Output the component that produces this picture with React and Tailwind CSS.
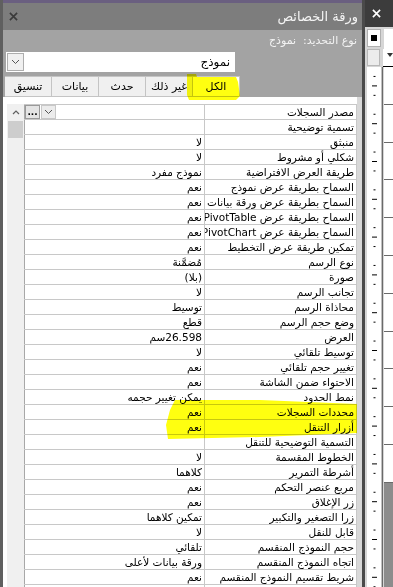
import { useState } from "react";

const rows = [
  ["مصدر السجلات", ""],
  ["تسمية توضيحية", ""],
  ["منبثق", "لا"],
  ["شكلي أو مشروط", "لا"],
  ["طريقة العرض الافتراضية", "نموذج مفرد"],
  ["السماح بطريقة عرض نموذج", "نعم"],
  ["السماح بطريقة عرض ورقة بيانات", "نعم"],
  ["السماح بطريقة عرض PivotTable", "نعم"],
  ["السماح بطريقة عرض PivotChart", "نعم"],
  ["تمكين طريقة عرض التخطيط", "نعم"],
  ["نوع الرسم", "مُضمَّنة"],
  ["صورة", "(بلا)"],
  ["تجانب الرسم", "لا"],
  ["محاذاة الرسم", "توسيط"],
  ["وضع حجم الرسم", "قطع"],
  ["العرض", "26.598سم"],
  ["توسيط تلقائي", "لا"],
  ["تغيير حجم تلقائي", "نعم"],
  ["الاحتواء ضمن الشاشة", "نعم"],
  ["نمط الحدود", "يمكن تغيير حجمه"],
  ["محددات السجلات", "نعم"],
  ["أزرار التنقل", "نعم"],
  ["التسمية التوضيحية للتنقل", ""],
  ["الخطوط المقسمة", "لا"],
  ["أشرطة التمرير", "كلاهما"],
  ["مربع عنصر التحكم", "نعم"],
  ["زر الإغلاق", "نعم"],
  ["زرا التصغير والتكبير", "تمكين كلاهما"],
  ["قابل للنقل", "لا"],
  ["حجم النموذج المنقسم", "تلقائي"],
  ["اتجاه النموذج المنقسم", "ورقة بيانات لأعلى"],
  ["شريط تقسيم النموذج المنقسم", "نعم"],
  ["", ""],
]

const tabs = ["الكل", "غير ذلك", "حدث", "بيانات", "تنسيق"]

function Cross({ color, size = 9 }) {
  return (
    <svg width={size} height={size} viewBox="0 0 10 10">
      <path d="M1 1 L9 9 M9 1 L1 9" stroke={color} strokeWidth="1.8" />
    </svg>
  )
}

function Chevron() {
  return (
    <svg width="9" height="6" viewBox="0 0 9 6">
      <path d="M1 1 L4.5 4.5 L8 1" stroke="#555" strokeWidth="1" fill="none" />
    </svg>
  )
}

function PropertySheet() {
  const [tab, setTab] = useState("الكل")

  return (
    <div dir="rtl" className="flex flex-col w-[362px] shrink-0 h-full bg-[#a3a3a3] border-l-[3px] border-[#5f5f5f]">
      <div className="h-[3px] bg-[#6a5f80]" />
      {/* title */}
      <div className="flex items-center justify-between h-[27px] bg-[#7d7d7d] pr-[4px] pl-[6px]">
        <span className="text-[13px] text-[#f4f4f4]">ورقة الخصائص</span>
        <Cross color="#3a3a3a" size={9} />
      </div>

      <div className="h-[22px] flex items-center pr-[5px] text-[11px] text-[#f2f2f2]">
        نوع التحديد:&nbsp;&nbsp;نموذج
      </div>

      {/* selection dropdown */}
      <div className="flex items-center justify-between h-[20px] mr-[127px] ml-[3px] bg-white">
        <span className="pr-[5px] text-[12px] text-black">نموذج</span>
        <div className="flex items-center justify-center w-[17px] h-[18px] ml-[1px] border border-[#adadad] bg-[#f0f0f0]">
          <Chevron />
        </div>
      </div>

      {/* tabs */}
      <div className="flex h-[21px] mt-[4px] mr-[122px] ml-[2px]">
        {tabs.map((t) => (
          <button
            key={t}
            onClick={() => setTab(t)}
            className={
              "w-[47px] h-full border border-l-0 border-[#c4c4c4] text-[11px] text-black leading-none whitespace-nowrap " +
              (tab === t ? "bg-white" : "bg-[#f0f0f0]")
            }
          >
            {t}
          </button>
        ))}
      </div>

      {/* grid */}
      <div className="flex flex-1 min-h-0">
        <div className="w-[5px] bg-[#d8d8d8]" />
        <div className="flex flex-1 bg-white pt-[7px] pl-[4px]">
          <div className="flex-1 border-t border-r border-[#c8c8c8]">
            {rows.map(([name, value], i) => (
              <div key={i} className="flex h-[15px] border-b border-[#c8c8c8] leading-[14px] text-[10.5px] text-black">
                <div className="w-[152px] shrink-0 pr-[2px] border-l border-[#c8c8c8] overflow-hidden whitespace-nowrap">
                  {name}
                </div>
                <div className="flex flex-1 pr-[2px] border-l border-[#a8a8a8] overflow-hidden whitespace-nowrap">
                  {i === 0 ? (
                    <div className="flex flex-1 justify-end gap-[1px]">
                      <div className="flex items-center justify-center w-[15px] h-[14px] border border-[#c8c8c8] bg-[#ececec]">
                        <Chevron />
                      </div>
                      <div className="flex items-center justify-center w-[15px] h-[14px] border border-[#9a9a9a] bg-[#e4e4e4] text-[9px] font-bold leading-none">
                        ...
                      </div>
                    </div>
                  ) : (
                    value
                  )}
                </div>
              </div>
            ))}
          </div>
          {/* scrollbar */}
          <div className="flex flex-col w-[17px] bg-[#f0f0f0]">
            <div className="flex items-center justify-center h-[17px]">
              <svg width="8" height="5" viewBox="0 0 8 5">
                <path d="M1 4 L4 1 L7 4" stroke="#606060" strokeWidth="1.2" fill="none" />
              </svg>
            </div>
            <div className="h-[17px] mx-[1px] bg-[#cdcdcd]" />
          </div>
        </div>
      </div>
    </div>
  )
}

function Ruler() {
  const ticks = []
  for (let j = 1; j < 56; j++) {
    if (j % 4 === 0) continue
    const y = j * 9.45
    const long = j % 4 === 2
    ticks.push(
      <line key={j} x1={long ? 5 : 6.5} x2={long ? 10 : 8.5} y1={y} y2={y} stroke="#000" strokeWidth="1" />
    )
  }
  return (
    <svg width="14" height="520" viewBox="0 0 14 520" className="block">
      {ticks}
    </svg>
  )
}

function DesignPane() {
  return (
    <div className="flex flex-col w-[28px] shrink-0 h-full bg-[#3c3c3c]">
      <div className="flex items-center h-[30px] pl-[7px]">
        <Cross color="#ffffff" size={9} />
      </div>
      <div className="flex flex-col flex-1 bg-[#d6d6d6] pt-[2px]">
        <div className="flex h-[20px]">
          <div className="flex items-center justify-center w-[14px] ml-[2px] h-[18px] bg-white border border-[#b0b0b0]">
            <div className="w-[6px] h-[6px] bg-black" />
          </div>
          <div className="w-[2px]" />
          <div className="flex-1 ml-[1px] bg-white" />
        </div>
        <div className="flex h-[18px]">
          <div className="w-[14px] ml-[2px] h-[17px] bg-[#ececec] border border-[#b8b8b8]" />
          <div className="w-[3px]" />
          <div className="flex-1 bg-white border-b border-black pl-[4px] pt-[4px]">
            <svg width="6" height="4" viewBox="0 0 6 4">
              <path d="M0 0 L6 0 L3 4 Z" fill="#333" />
            </svg>
          </div>
        </div>
        <div className="flex flex-1 min-h-0 overflow-hidden">
          <div className="w-[14px] ml-[2px] bg-white">
            <Ruler />
          </div>
          <div className="w-[1px] bg-[#c0c0c0]" />
          <div className="w-[1px] bg-[#6a6a6a]" />
          <div className="flex flex-col flex-1 ml-[1px] bg-[#8c8c8c]">
            <div className="flex flex-col bg-white">
              {Array.from({ length: 11 }).map((_, i) => (
                <div key={i} className="h-[37.8px] border-b border-[#6a6a6a]" />
              ))}
            </div>
          </div>
        </div>
      </div>
    </div>
  )
}

export default function App() {
  return (
    <div className="relative flex w-[393px] h-[587px] overflow-hidden bg-[#3c3c3c] font-['DejaVu_Sans',sans-serif]">
      <PropertySheet />
      <div className="w-[3px] shrink-0 bg-[#4a4a4a]" />
      <DesignPane />
      {/* highlighter marks */}
      <svg
        width="393"
        height="587"
        viewBox="0 0 393 587"
        className="absolute inset-0 pointer-events-none mix-blend-multiply"
      >
        <polygon
          points="187,74 196,74 197,77 236,77 238,82 240,96 236,100 189,100 187,95"
          fill="#ffff10"
        />
        <polygon
          points="175,400 260,400 357,404 357,433 260,437 168,439 166,425 170,410"
          fill="#ffff10"
        />
      </svg>
    </div>
  )
}
